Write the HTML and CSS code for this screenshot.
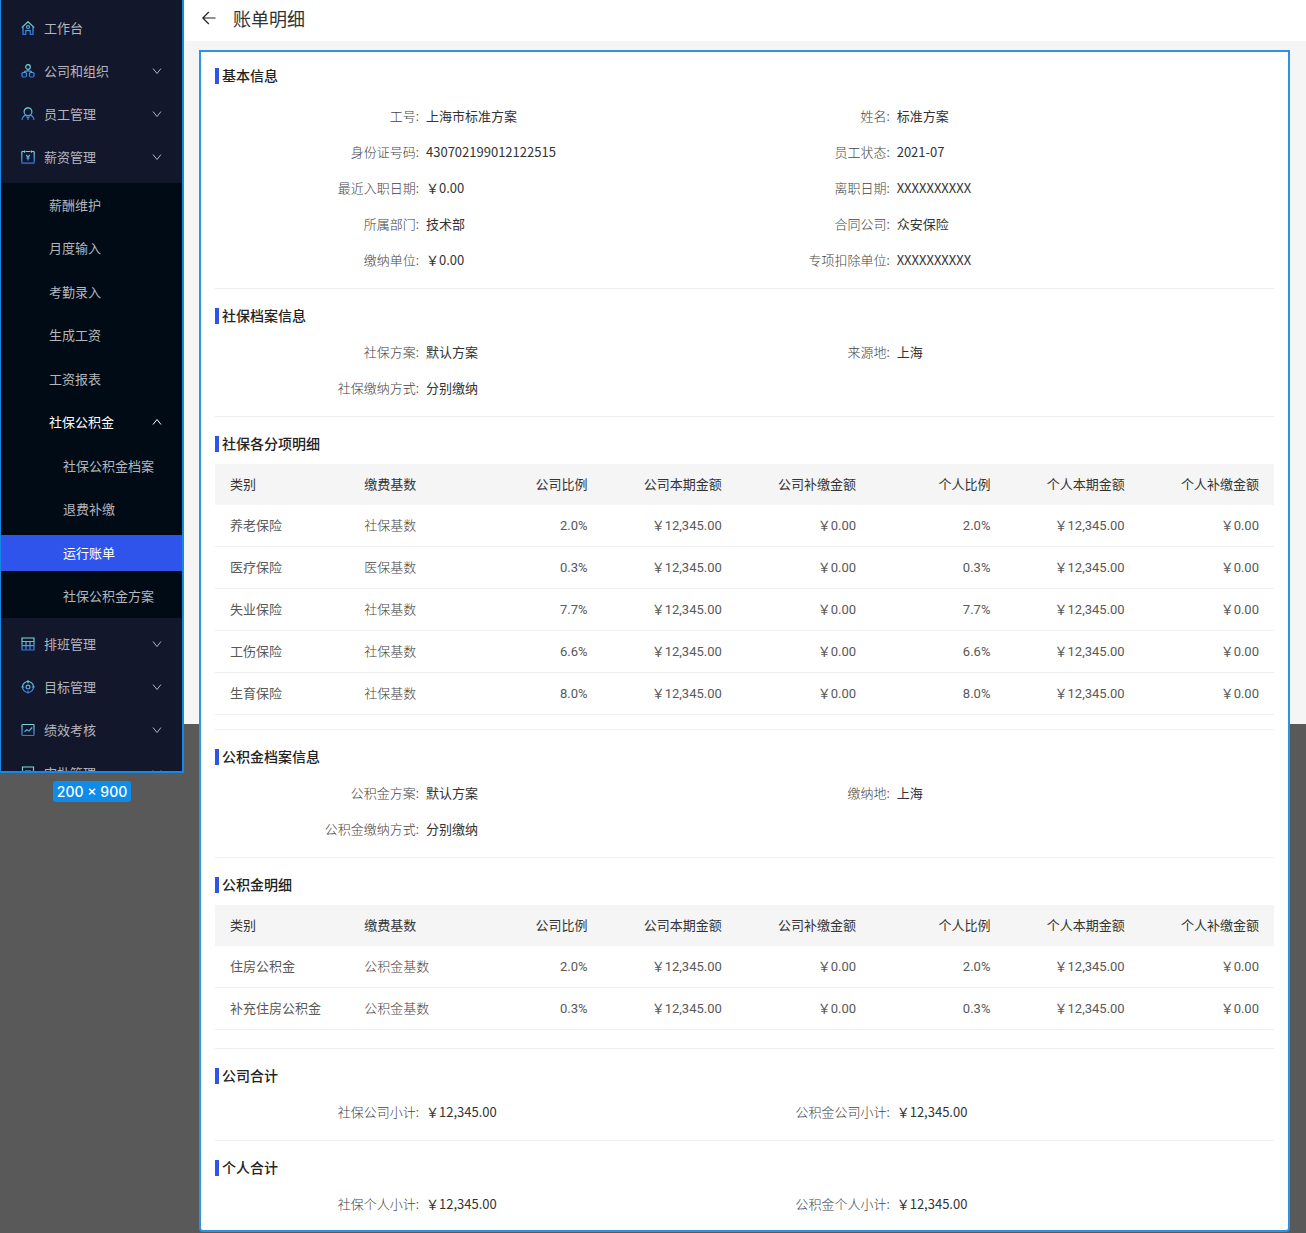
FILE: index.html
```html
<!DOCTYPE html>
<html lang="zh-CN">
<head>
<meta charset="utf-8">
<meta name="viewport" content="width=device-width, initial-scale=1">
<title>账单明细</title>
<link rel="stylesheet" href="styles.css">
</head>
<body>
<svg class="defs" width="0" height="0" aria-hidden="true">
  <defs>
    <linearGradient id="ink" gradientUnits="userSpaceOnUse" x1="0" y1="0" x2="0" y2="14">
      <stop offset="0" stop-color="#7fe3d2"/>
      <stop offset="1" stop-color="#2f6fe8"/>
    </linearGradient>
    <symbol id="down" viewBox="0 0 10 10"><path d="M1 2.5 5 7.500 9 2.500"/></symbol>
  </defs>
</svg>
<div class="app">
  <div class="side">
    <nav class="sidebar" aria-label="主菜单">
      <ul class="menu menu-top">
        <li><a class="item" href="#"><svg class="icon" viewBox="0 0 14 14"><path d="M.8 6.500 7 .8l6.200 5.700M2 5.500V13.300h2.800V9.500h4.400v3.800H12V5.500"/><circle cx="7" cy="6" r="1.500"/></svg><span>工作台</span></a></li>
        <li><a class="item" href="#"><svg class="icon" viewBox="0 0 14 14"><circle cx="7" cy="3" r="2.300"/><rect x="1" y="8.500" width="4.500" height="4.500" rx="1.200"/><rect x="8.500" y="8.500" width="4.500" height="4.500" rx="1.200"/><path d="M7 5.300v1.500M3.200 8.500C3.200 7 4.500 6.800 7 6.800s3.800.2 3.800 1.700"/></svg><span>公司和组织</span><svg class="chevron"><use href="#down"/></svg></a></li>
        <li><a class="item" href="#"><svg class="icon" viewBox="0 0 14 14"><circle cx="7" cy="4.800" r="3.900"/><path d="M1 13c.3-2.500 1.800-4.300 4-4.900M13 13c-.3-2.500-1.800-4.300-4-4.900M5.500 9.500 7 11.200l1.500-1.700M7 11v2"/></svg><span>员工管理</span><svg class="chevron"><use href="#down"/></svg></a></li>
        <li><a class="item" href="#"><svg class="icon" viewBox="0 0 14 14"><path d="M3 1.500H1.600c-.4 0-.8.3-.8.7v10.200c0 .4.400.7.8.7h10.800c.4 0 .8-.3.8-.7V2.200c0-.4-.4-.7-.8-.7H11M4.500 1.500h5M3.500.5v2.200M10.500.5v2.200M5.200 5 7 7.200 8.800 5M5.500 8.200h3M7 7.200V10.500"/></svg><span>薪资管理</span><svg class="chevron"><use href="#down"/></svg></a></li>
      </ul>
      <ul class="submenu">
        <li><a class="item level-2" href="#">薪酬维护</a></li>
        <li><a class="item level-2" href="#">月度输入</a></li>
        <li><a class="item level-2" href="#">考勤录入</a></li>
        <li><a class="item level-2" href="#">生成工资</a></li>
        <li><a class="item level-2" href="#">工资报表</a></li>
        <li><a class="item level-2 open" href="#"><span>社保公积金</span><svg class="chevron up"><use href="#down"/></svg></a></li>
        <li><a class="item level-3" href="#">社保公积金档案</a></li>
        <li><a class="item level-3" href="#">退费补缴</a></li>
        <li><a class="item level-3 current" href="#" aria-current="page">运行账单</a></li>
        <li><a class="item level-3" href="#">社保公积金方案</a></li>
      </ul>
      <ul class="menu menu-bottom">
        <li><a class="item" href="#"><svg class="icon" viewBox="0 0 14 14"><path d="M1 1h12v12H1zM1 4.500h12M1 8.700h12M5 4.500V13M9 4.500V13"/></svg><span>排班管理</span><svg class="chevron"><use href="#down"/></svg></a></li>
        <li><a class="item" href="#"><svg class="icon" viewBox="0 0 14 14"><circle cx="7" cy="7" r="5.500"/><circle cx="7" cy="7" r="1.900"/><path d="M7 .2v3M7 10.800v3M.2 7h3M10.800 7h3"/></svg><span>目标管理</span><svg class="chevron"><use href="#down"/></svg></a></li>
        <li><a class="item" href="#"><svg class="icon" viewBox="0 0 14 14"><rect x="1" y="1.500" width="12" height="11" rx=".8"/><path d="m3.500 8.800 2.200-2.100L8 8l3.200-3.500"/></svg><span>绩效考核</span><svg class="chevron"><use href="#down"/></svg></a></li>
        <li><a class="item" href="#"><svg class="icon" viewBox="0 0 14 14"><path d="M1.500 1h11v12h-11zM4 5h6M4 8h4"/></svg><span>审批管理</span><svg class="chevron"><use href="#down"/></svg></a></li>
      </ul>
    </nav>
    <span class="size-tag">200 × 900</span>
  </div>

  <main class="main">
    <header class="topbar">
      <button class="back" type="button" aria-label="返回"><svg viewBox="0 0 14 14"><path d="M13.500 7H1M6.800 1 .8 7l6 6"/></svg></button>
      <h1>账单明细</h1>
    </header>
    <div class="card">
      <section class="section first">
        <h2>基本信息</h2>
        <dl class="info">
          <div><dt>工号:</dt><dd>上海市标准方案</dd></div>
          <div><dt>姓名:</dt><dd>标准方案</dd></div>
          <div><dt>身份证号码:</dt><dd>430702199012122515</dd></div>
          <div><dt>员工状态:</dt><dd>2021-07</dd></div>
          <div><dt>最近入职日期:</dt><dd>￥0.00</dd></div>
          <div><dt>离职日期:</dt><dd>XXXXXXXXXX</dd></div>
          <div><dt>所属部门:</dt><dd>技术部</dd></div>
          <div><dt>合同公司:</dt><dd>众安保险</dd></div>
          <div><dt>缴纳单位:</dt><dd>￥0.00</dd></div>
          <div><dt>专项扣除单位:</dt><dd>XXXXXXXXXX</dd></div>
        </dl>
      </section>
      <section class="section">
        <h2>社保档案信息</h2>
        <dl class="info">
          <div><dt>社保方案:</dt><dd>默认方案</dd></div>
          <div><dt>来源地:</dt><dd>上海</dd></div>
          <div><dt>社保缴纳方式:</dt><dd>分别缴纳</dd></div>
        </dl>
      </section>
      <section class="section social">
        <h2 id="social">社保各分项明细</h2>
        <table class="detail" aria-labelledby="social">
          <colgroup><col><col class="base"><col><col><col><col><col><col></colgroup>
          <thead><tr><th>类别</th><th>缴费基数</th><th>公司比例</th><th>公司本期金额</th><th>公司补缴金额</th><th>个人比例</th><th>个人本期金额</th><th>个人补缴金额</th></tr></thead>
          <tbody>
            <tr><td>养老保险</td><td>社保基数</td><td>2.0%</td><td>￥12,345.00</td><td>￥0.00</td><td>2.0%</td><td>￥12,345.00</td><td>￥0.00</td></tr>
            <tr><td>医疗保险</td><td>医保基数</td><td>0.3%</td><td>￥12,345.00</td><td>￥0.00</td><td>0.3%</td><td>￥12,345.00</td><td>￥0.00</td></tr>
            <tr><td>失业保险</td><td>社保基数</td><td>7.7%</td><td>￥12,345.00</td><td>￥0.00</td><td>7.7%</td><td>￥12,345.00</td><td>￥0.00</td></tr>
            <tr><td>工伤保险</td><td>社保基数</td><td>6.6%</td><td>￥12,345.00</td><td>￥0.00</td><td>6.6%</td><td>￥12,345.00</td><td>￥0.00</td></tr>
            <tr><td>生育保险</td><td>社保基数</td><td>8.0%</td><td>￥12,345.00</td><td>￥0.00</td><td>8.0%</td><td>￥12,345.00</td><td>￥0.00</td></tr>
          </tbody>
        </table>
      </section>
      <section class="section">
        <h2>公积金档案信息</h2>
        <dl class="info">
          <div><dt>公积金方案:</dt><dd>默认方案</dd></div>
          <div><dt>缴纳地:</dt><dd>上海</dd></div>
          <div><dt>公积金缴纳方式:</dt><dd>分别缴纳</dd></div>
        </dl>
      </section>
      <section class="section fund">
        <h2 id="fund">公积金明细</h2>
        <table class="detail" aria-labelledby="fund">
          <colgroup><col><col class="base"><col><col><col><col><col><col></colgroup>
          <thead><tr><th>类别</th><th>缴费基数</th><th>公司比例</th><th>公司本期金额</th><th>公司补缴金额</th><th>个人比例</th><th>个人本期金额</th><th>个人补缴金额</th></tr></thead>
          <tbody>
            <tr><td>住房公积金</td><td>公积金基数</td><td>2.0%</td><td>￥12,345.00</td><td>￥0.00</td><td>2.0%</td><td>￥12,345.00</td><td>￥0.00</td></tr>
            <tr><td>补充住房公积金</td><td>公积金基数</td><td>0.3%</td><td>￥12,345.00</td><td>￥0.00</td><td>0.3%</td><td>￥12,345.00</td><td>￥0.00</td></tr>
          </tbody>
        </table>
      </section>
      <section class="section">
        <h2>公司合计</h2>
        <dl class="info">
          <div><dt>社保公司小计:</dt><dd>￥12,345.00</dd></div>
          <div><dt>公积金公司小计:</dt><dd>￥12,345.00</dd></div>
        </dl>
      </section>
      <section class="section last">
        <h2>个人合计</h2>
        <dl class="info">
          <div><dt>社保个人小计:</dt><dd>￥12,345.00</dd></div>
          <div><dt>公积金个人小计:</dt><dd>￥12,345.00</dd></div>
        </dl>
      </section>
    </div>
  </main>
</div>
</body>
</html>
```
FILE: styles.css
```css
* {
  box-sizing: border-box;
}

body,
h1,
h2,
ul,
dl,
dd {
  margin: 0;
  padding: 0;
}

body {
  background: #595959;
  color: #333;
  font: 13px/20px "Noto Sans CJK SC", sans-serif;
}

ul {
  list-style: none;
}

a {
  color: inherit;
  text-decoration: none;
}

svg {
  fill: none;
  stroke: currentColor;
}

.defs {
  position: absolute;
}

.app {
  display: flex;
  align-items: flex-start;
}

/* Sidebar frame */
.side {
  display: flex;
  flex: 0 0 184px;
  flex-direction: column;
  align-items: center;
  gap: 8px;
}

.sidebar {
  width: 100%;
  height: 773px;
  overflow: hidden;
  border: solid #1488e4;
  border-width: 0 2px 2px 1px;
  background: #12172c;
  color: #b4b6bc;
}

.menu {
  display: grid;
  gap: 7px;
}

.menu-top {
  padding: 10px 0 8px;
}

.menu-bottom {
  padding-top: 8px;
}

.submenu {
  display: flex;
  flex-direction: column;
  justify-content: space-between;
  height: 435px;
  padding: 4px 0;
  background: #000b15;
}

.item {
  display: flex;
  align-items: center;
  height: 36px;
  padding: 0 20px;
  white-space: nowrap;
}

.level-2 {
  padding-left: 48px;
}

.level-3 {
  padding-left: 62px;
}

.open {
  color: #fff;
}

.current {
  background: #2f54eb;
  color: #fff;
}

.icon {
  width: 14px;
  height: 14px;
  margin-right: 9px;
  stroke: url(#ink);
  stroke-width: 1.2;
}

.chevron {
  width: 10px;
  height: 10px;
  margin-left: auto;
}

.up {
  transform: rotate(180deg);
}

.size-tag {
  padding: 0 4px;
  border-radius: 3px;
  background: #0d8ce9;
  color: #fff;
  font: 500 14px/21px Inter, sans-serif;
}

/* Page */
.main {
  flex: 1;
  min-width: 0;
  background: linear-gradient(#f5f5f5 724px, #595959 724px);
}

.topbar {
  display: flex;
  align-items: center;
  gap: 17px;
  height: 41px;
  padding: 0 18px 5px;
  background: #fff;
}

.topbar h1 {
  font-size: 18px;
  font-weight: 400;
  line-height: 26px;
}

.back {
  display: flex;
  padding: 0;
  border: 0;
  background: none;
  color: #222;
}

.back svg {
  width: 14px;
  height: 14px;
  stroke-width: 1.2;
}

.card {
  margin: 9px 16px 0 15px;
  padding: 0 14px;
  border: 2px solid #2d92df;
  border-radius: 0 0 4px 4px;
  background: #fff;
}

.section {
  padding: 19px 0 10px;
  border-top: 1px solid #f0f0f0;
}

.social {
  padding-bottom: 14px;
}

.fund {
  padding-bottom: 18px;
}

.first {
  padding-top: 16px;
  border-top: 0;
}

.last {
  padding-bottom: 8px;
}

.section h2 {
  display: flex;
  gap: 3px;
  height: 16px;
  margin-bottom: 10px;
  color: #222;
  font-size: 14px;
  font-weight: 500;
  line-height: 14px;
}

.section h2::before {
  width: 4px;
  height: 16px;
  background: #2f54eb;
  content: "";
}

.first h2 {
  margin-bottom: 14px;
}

.info {
  display: grid;
  grid-template-columns: 4fr 4fr 1fr;
}

.info > div {
  display: grid;
  grid-template-columns: 11fr 14fr;
  gap: 7px;
  align-items: center;
  height: 36px;
  white-space: nowrap;
}

.info > div:nth-child(odd) {
  grid-column: 1;
}

.info dt {
  color: #444;
  font-weight: 300;
  text-align: right;
}

/* Detail tables */
.detail {
  width: 100%;
  margin-top: 12px;
  border-collapse: separate;
  border-spacing: 0;
  table-layout: fixed;
  color: #595959;
  font-family: Roboto, "Noto Sans CJK SC", sans-serif;
  white-space: nowrap;
}

.base {
  width: 119px;
}

.detail th,
.detail td {
  padding: 1px 15px 0;
  text-align: right;
}

.detail th {
  height: 41px;
  background: #f5f5f5;
  color: #333;
  font-weight: 400;
}

.detail td {
  height: 42px;
  border-bottom: 1px solid #f0f0f0;
}

.detail tr > :nth-child(-n + 2) {
  text-align: left;
}

.detail td:nth-child(2) {
  color: #444;
  font-weight: 300;
}
```
